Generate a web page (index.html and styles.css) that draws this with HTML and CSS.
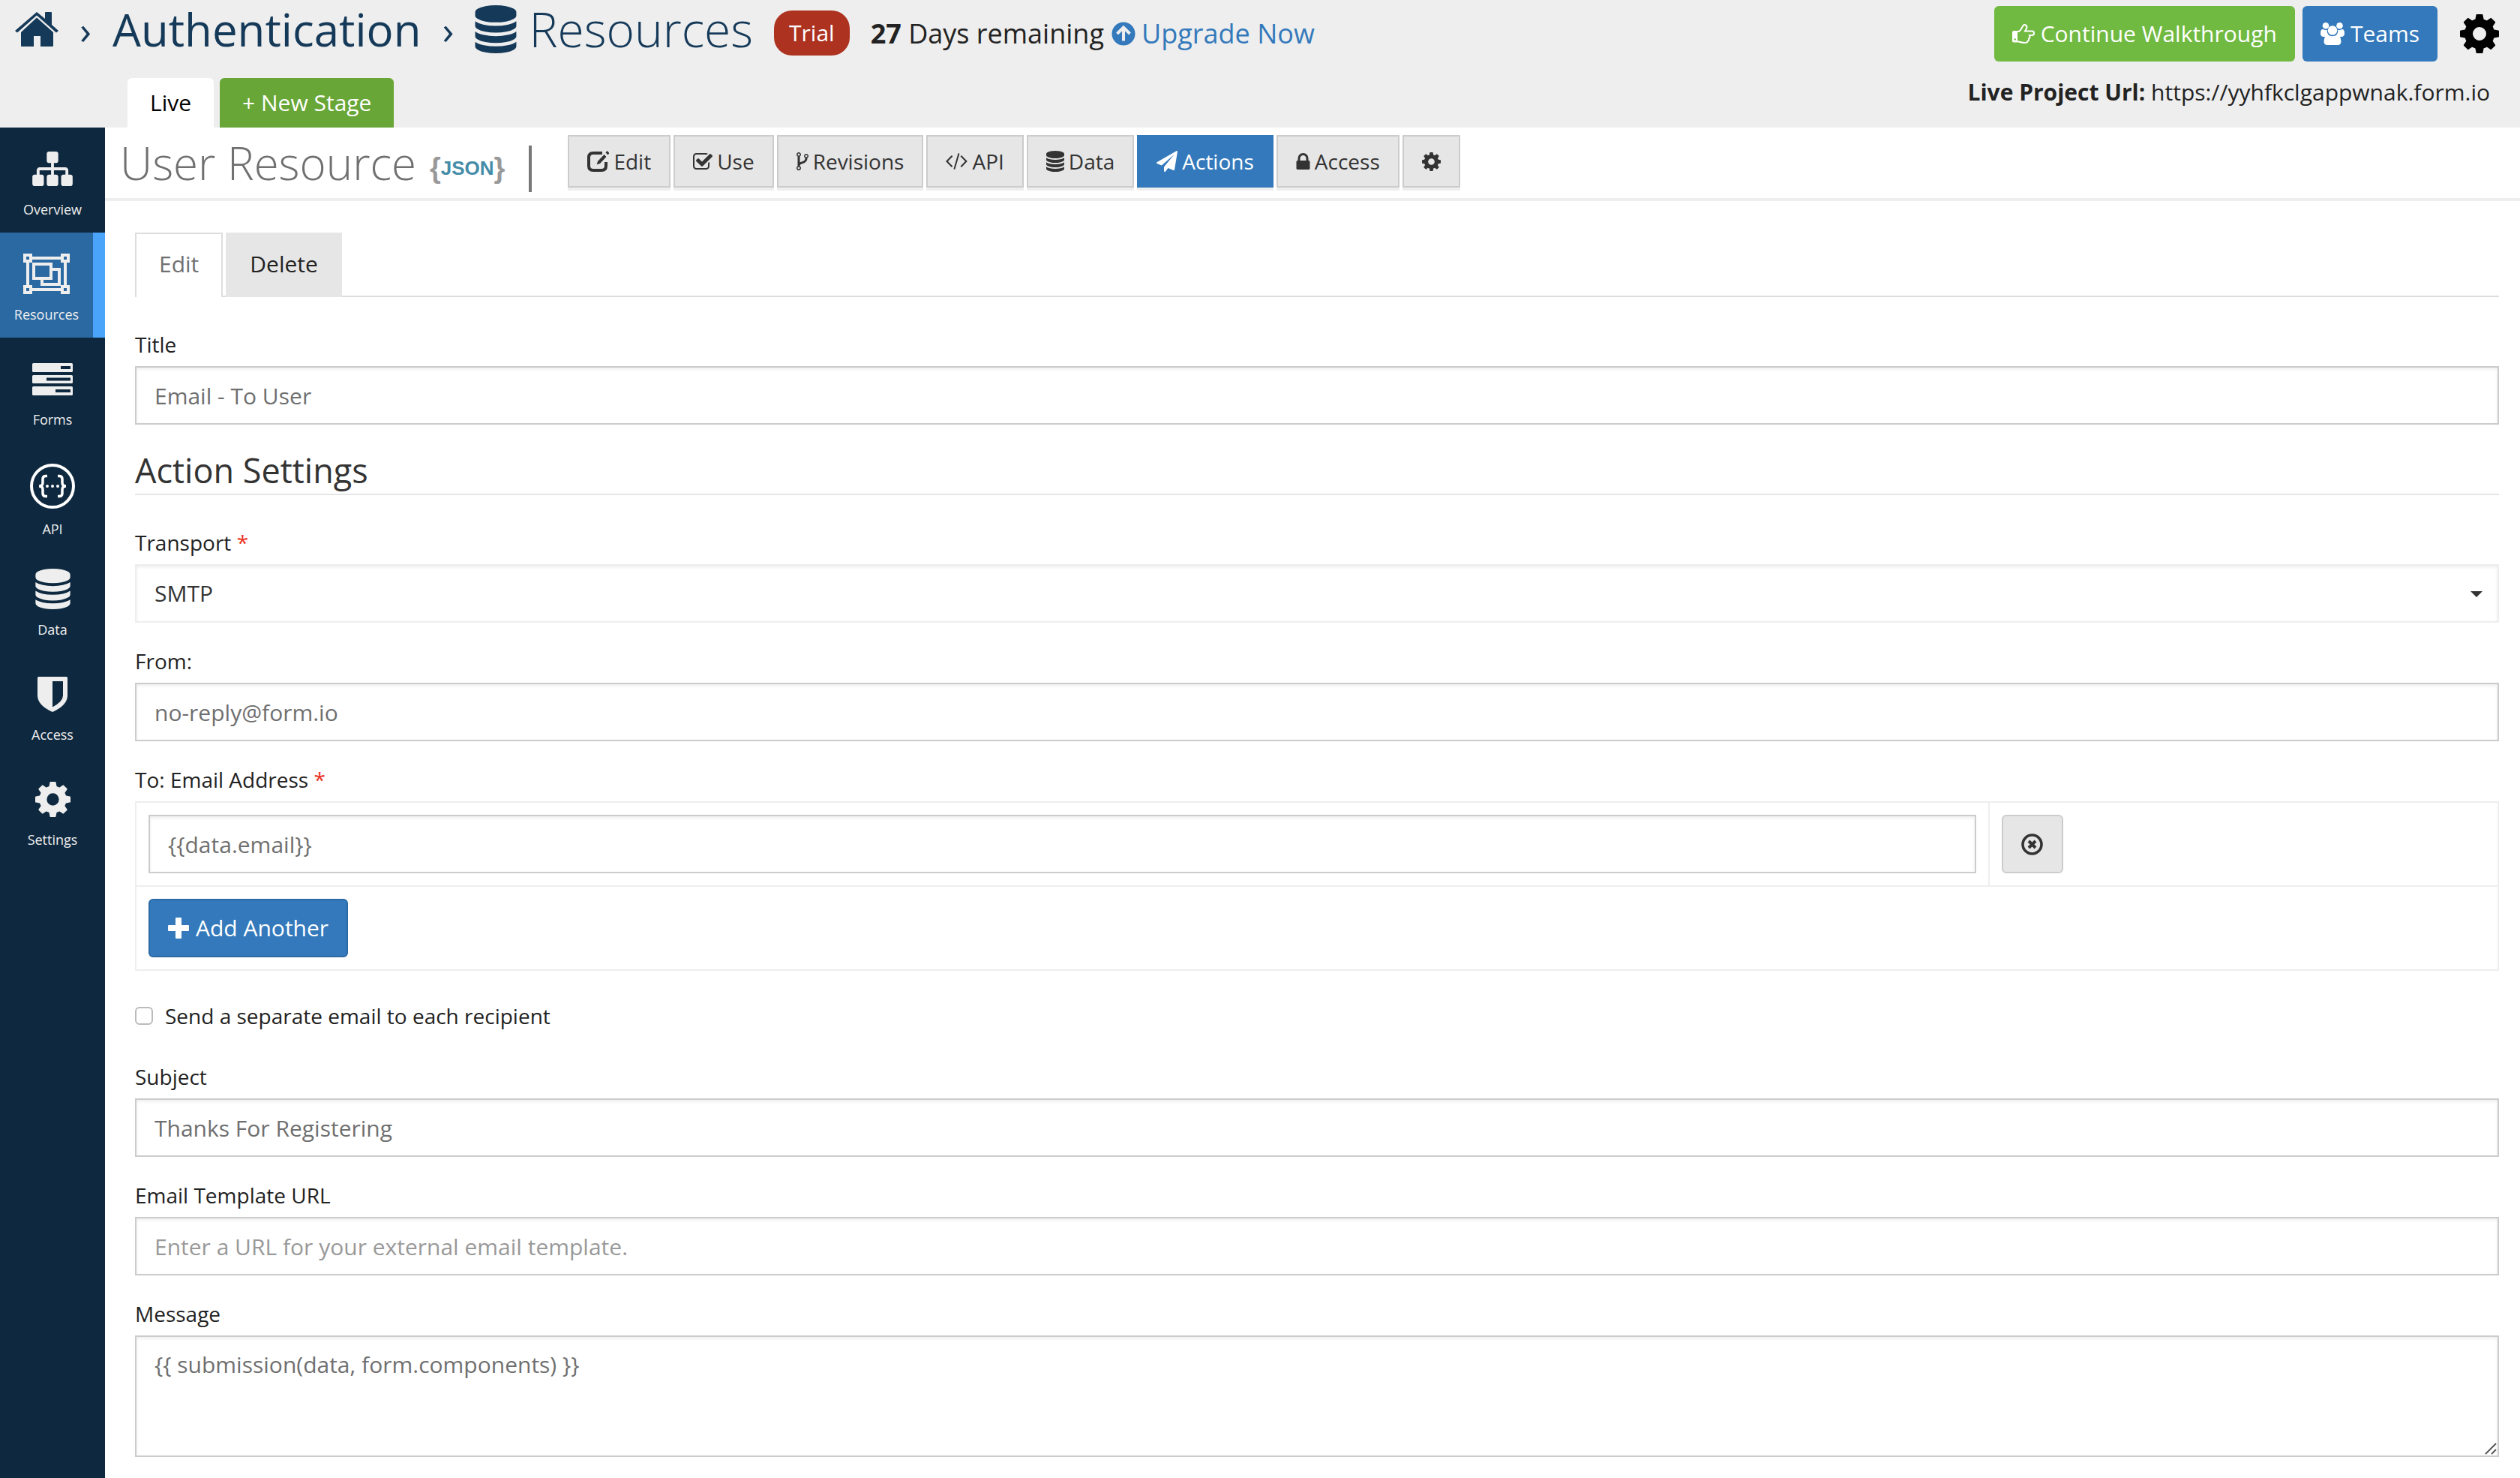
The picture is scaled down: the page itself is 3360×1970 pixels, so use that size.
FILE: index.html
```html
<!DOCTYPE html>
<html lang="en">
<head>
<meta charset="utf-8">
<title>User Resource - Actions</title>
<link rel="stylesheet" href="styles.css">
</head>
<body>
<svg class="sprite" aria-hidden="true">
  <symbol id="i-home" viewBox="0 0 58 46"><path d="M29 0 40 9V1q0-1 1-1h7q1 0 1 1v16l9 8-3 2.500L29 4.500 3 27.500 0 25z"/><path d="M29 7.500 51 27v18q0 1-1 1H34V32h-9v14H9q-1 0-1-1V27z"/></symbol>
  <symbol id="i-db" viewBox="128 0 1536 1792"><path d="M896 768q237 0 443-43t325-127v170q0 69-103 128t-280 93.500-385 34.500-385-34.500-280-93.500-103-128v-170q119 84 325 127t443 43zm0 768q237 0 443-43t325-127v170q0 69-103 128t-280 93.500-385 34.500-385-34.500-280-93.500-103-128v-170q119 84 325 127t443 43zm0-384q237 0 443-43t325-127v170q0 69-103 128t-280 93.500-385 34.500-385-34.500-280-93.500-103-128v-170q119 84 325 127t443 43zm0-1152q208 0 385 34.500t280 93.500 103 128v128q0 69-103 128t-280 93.500-385 34.500-385-34.500-280-93.500-103-128v-128q0-69 103-128t280-93.500 385-34.500z"/></symbol>
  <symbol id="i-cog" viewBox="-26 -26 52 52"><circle r="14.500" fill="none" stroke="currentColor" stroke-width="11"/><g id="teeth"><path id="tooth" d="M-6-17-4.500-25q0-1 1-1h7q1 0 1 1L6-17z"/><use href="#tooth" transform="rotate(45)"/><use href="#tooth" transform="rotate(90)"/><use href="#tooth" transform="rotate(135)"/><use href="#tooth" transform="rotate(180)"/><use href="#tooth" transform="rotate(225)"/><use href="#tooth" transform="rotate(270)"/><use href="#tooth" transform="rotate(315)"/></g></symbol>
  <symbol id="i-sitemap" viewBox="0 128 1792 1536"><path d="M1792 1248v320q0 40-28 68t-68 28h-320q-40 0-68-28t-28-68v-320q0-40 28-68t68-28h96v-192h-512v192h96q40 0 68 28t28 68v320q0 40-28 68t-68 28h-320q-40 0-68-28t-28-68v-320q0-40 28-68t68-28h96v-192h-512v192h96q40 0 68 28t28 68v320q0 40-28 68t-68 28h-320q-40 0-68-28t-28-68v-320q0-40 28-68t68-28h96v-192q0-52 38-90t90-38h512v-192h-96q-40 0-68-28t-28-68v-320q0-40 28-68t68-28h320q40 0 68 28t28 68v320q0 40-28 68t-68 28h-96v192h512q52 0 90 38t38 90v192h96q40 0 68 28t28 68z"/></symbol>
  <symbol id="i-group" viewBox="0 0 62 54"><g fill="none" stroke="currentColor" stroke-width="4"><path d="M12 6h38M12 48h38M6 12v30M56 12v30"/><rect x="2" y="2" width="8" height="8"/><rect x="52" y="2" width="8" height="8"/><rect x="2" y="44" width="8" height="8"/><rect x="52" y="44" width="8" height="8"/><rect x="14" y="14" width="23" height="19"/><path d="M38 21h10v20H25v-8"/></g></symbol>
  <symbol id="i-server" viewBox="0 0 54 43"><path fill-rule="evenodd" d="M1.500 0h51q1.500 0 1.500 1.500v9q0 1.500-1.500 1.500h-51Q0 12 0 10.500v-9Q0 0 1.500 0zM38 4v4h13V4zM1.500 16h51q1.500 0 1.500 1.500v8q0 1.500-1.500 1.500h-51Q0 27 0 25.500v-8Q0 16 1.500 16zM19 19.500v4h32v-4zM1.500 31h51q1.500 0 1.500 1.500v9q0 1.500-1.500 1.500h-51Q0 43 0 41.500v-9Q0 31 1.500 31zM31 35v4h20v-4z"/></symbol>
  <symbol id="i-api" viewBox="0 0 60 60"><g fill="none" stroke="#fff" stroke-width="4"><circle cx="30" cy="30" r="28"/><path stroke-width="3.500" d="M23 16.500h-2q-4 0-4 4v5q0 4.500-5 4.500 5 0 5 4.500v5q0 4 4 4h2M37 16.500h2q4 0 4 4v5q0 4.500 5 4.500-5 0-5 4.500v5q0 4-4 4h-2"/></g><g fill="#fff"><circle cx="23" cy="30" r="2"/><circle cx="30" cy="30" r="2"/><circle cx="37" cy="30" r="2"/></g></symbol>
  <symbol id="i-shield" viewBox="0 0 40 47"><path fill-rule="evenodd" d="M1.500 0h37Q40 0 40 1.500V25Q40 38 20 47 0 38 0 25V1.500Q0 0 1.500 0zM20 6v34.500Q34 33 34 25V6z"/></symbol>
  <symbol id="i-edit" viewBox="0 0 29 28"><path d="M20 3H8Q2 3 2 9v11q0 6 6 6h11q6 0 6-6v-5" fill="none" stroke="currentColor" stroke-width="4"/><path d="M12 19l1.500-5L22.500 4.500 26 8 17 17.500z" stroke="#e6e6e6"/><path d="M24.500 2.500 26.500 0 29.500 3 27.500 5.500z"/></symbol>
  <symbol id="i-check" viewBox="64 128 1664 1408"><path d="M1472 930v318q0 119-84.500 203.500t-203.500 84.500h-832q-119 0-203.500-84.500t-84.500-203.500v-832q0-119 84.500-203.500t203.500-84.500h832q63 0 117 25 15 7 18 23 3 17-9 29l-49 49q-10 10-23 10-3 0-9-2-23-6-45-6h-832q-66 0-113 47t-47 113v832q0 66 47 113t113 47h832q66 0 113-47t47-113v-254q0-13 9-22l64-64q10-10 23-10 6 0 12 3 20 8 20 29zm231-489l-814 814q-24 24-57 24t-57-24l-430-430q-24-24-24-57t24-57l110-110q24-24 57-24t57 24l263 263 647-647q24-24 57-24t57 24l110 110q24 24 24 57t-24 57z"/></symbol>
  <symbol id="i-fork" viewBox="384 128 1024 1536"><path d="M672 1472q0-40-28-68t-68-28-68 28-28 68 28 68 68 28 68-28 28-68zm0-1152q0-40-28-68t-68-28-68 28-28 68 28 68 68 28 68-28 28-68zm640 128q0-40-28-68t-68-28-68 28-28 68 28 68 68 28 68-28 28-68zm96 0q0 52-26 96.500t-70 69.500q-2 287-226 414-67 38-203 81-128 40-169.500 71t-41.500 100v26q44 25 70 69.500t26 96.500q0 80-56 136t-136 56-136-56-56-136q0-52 26-96.500t70-69.500v-820q-44-25-70-69.500t-26-96.500q0-80 56-136t136-56 136 56 56 136q0 52-26 96.500t-70 69.500v497q54-26 154-57 55-17 87.500-29.500t70.500-31 59-39.500 40.500-51 28-69.500 8.500-91.500q-44-25-70-69.500t-26-96.500q0-80 56-136t136-56 136 56 56 136z"/></symbol>
  <symbol id="i-code" viewBox="-9 256 1820 1408"><path d="M553 1399l-50 50q-10 10-23 10t-23-10l-466-466q-10-10-10-23t10-23l466-466q10-10 23-10t23 10l50 50q10 10 10 23t-10 23l-393 393 393 393q10 10 10 23t-10 23zm591-1067l-373 1291q-4 13-15.500 19.500t-23.500 2.500l-62-17q-13-4-19.500-15.500t-2.500-24.500l373-1291q4-13 15.500-19.500t23.500-2.500l62 17q13 4 19.500 15.500t2.500 24.500zm657 651l-466 466q-10 10-23 10t-23-10l-50-50q-10-10-10-23t10-23l393-393-393-393q-10-10-10-23t10-23l50-50q10-10 23-10t23 10l466 466q10 10 10 23t-10 23z"/></symbol>
  <symbol id="i-plane" viewBox="0 0 1792 1792"><path d="M1764 11q33 24 27 64l-256 1536q-5 29-32 45-14 8-31 8-11 0-24-5l-453-185-242 295q-18 23-49 23-13 0-22-4-19-7-30.500-23.500t-11.500-36.500v-349l864-1059-1069 925-395-162q-37-14-40-55-2-40 32-59l1664-960q15-9 32-9 20 0 36 11z"/></symbol>
  <symbol id="i-lock" viewBox="320 128 1152 1408"><path d="M640 768h512v-192q0-106-75-181t-181-75-181 75-75 181v192zm832 96v576q0 40-28 68t-68 28h-960q-40 0-68-28t-28-68v-576q0-40 28-68t68-28h32v-192q0-184 132-316t316-132 316 132 132 316v192h32q40 0 68 28t28 68z"/></symbol>
  <symbol id="i-up" viewBox="0 0 32 32"><circle cx="16" cy="16" r="15.500"/><path d="M7.500 16 16 7.500 24.500 16M16 9v16.500" fill="none" stroke="#eee" stroke-width="4"/></symbol>
  <symbol id="i-hand" viewBox="0 0 30 26"><path d="M2 10h6q2 0 4-3.500L14.500 2q2-2 4 0t0 5l-1.500 2.500h9.500q2.500 0 2.500 2.700T26.500 15H23q1.500 3-1 4.500.5 2.500-1.500 3.500-.5 2-3 2-5 0-9-1.500H2q-1 0-1-1V11q0-1 1-1z" fill="none" stroke="currentColor" stroke-width="2"/><path d="M1 10h6v13.500H1z"/><circle cx="3.700" cy="20.500" r="1.200" fill="#70ba41"/></symbol>
  <symbol id="i-users" viewBox="0 0 32 30"><circle cx="7" cy="4.300" r="4.300"/><circle cx="25.500" cy="4.300" r="4.300"/><circle cx="16" cy="10.500" r="6.200"/><path d="M3 9q4 2 6 .5-1 4 2 7-3 0-5 2.500H3q-3-1-3-4.500Q0 9 3 9zM29 9q3 0 3 5.500 0 3.500-3 4.500h-3q-2-2.500-5-2.500 3-3 2-7 2 1.500 6-.5zM10 16.500q6 3.500 12 0 5 .5 5.500 8.500 0 5-4.500 5H9q-4.500 0-4.500-5 .5-8 5.500-8.500z"/></symbol>
  <symbol id="i-plus" viewBox="0 0 28 28"><path d="M11 0h6q1 0 1 1v9h9q1 0 1 1v6q0 1-1 1h-9v9q0 1-1 1h-6q-1 0-1-1v-9H1q-1 0-1-1v-6q0-1 1-1h9V1q0-1 1-1z"/></symbol>
  <symbol id="i-remove" viewBox="0 0 29 29"><circle cx="14.500" cy="14.500" r="12.500" fill="none" stroke="currentColor" stroke-width="3.600"/><path d="M10 10l9 9M19 10l-9 9" stroke="currentColor" stroke-width="4"/></symbol>
  <symbol id="i-grip" viewBox="0 0 16 16"><path d="M1 15 15 1M9 15 15 9" stroke="#58585a" stroke-width="2" fill="none"/></symbol>
</svg>

<header class="topbar">
  <div class="topbar-row">
    <nav class="crumbs" aria-label="Breadcrumb">
      <a class="crumb-home" href="#" aria-label="Home"><svg class="ico" width="58" height="46"><use href="#i-home"/></svg></a>
      <span class="sep">›</span>
      <a class="crumb" href="#">Authentication</a>
      <span class="sep">›</span>
      <a class="crumb current" href="#"><svg class="ico" width="56" height="64"><use href="#i-db"/></svg>Resources</a>
    </nav>
    <span class="trial">Trial</span>
    <span class="remaining"><b>27</b> Days remaining</span>
    <a class="upgrade" href="#"><svg class="ico" width="32" height="32"><use href="#i-up"/></svg>Upgrade Now</a>
    <div class="top-actions">
      <button class="top-btn green" type="button"><svg class="ico" width="30" height="26"><use href="#i-hand"/></svg>Continue Walkthrough</button>
      <button class="top-btn blue" type="button"><svg class="ico" width="32" height="30"><use href="#i-users"/></svg>Teams</button>
      <button class="cog-btn" type="button" aria-label="Settings"><svg class="ico" width="52" height="52"><use href="#i-cog"/></svg></button>
    </div>
  </div>
  <div class="stage-row">
    <a class="stage live" href="#">Live</a>
    <a class="stage new" href="#">+ New Stage</a>
    <p class="project-url"><b>Live Project Url:</b> https://yyhfkclgappwnak.form.io</p>
  </div>
</header>

<div class="shell">
  <nav class="sidebar" aria-label="Project">
    <a class="side-item" href="#"><span class="side-ico"><svg class="ico" width="54" height="46"><use href="#i-sitemap"/></svg></span>Overview</a>
    <a class="side-item active" href="#"><span class="side-ico"><svg class="ico" width="62" height="54"><use href="#i-group"/></svg></span>Resources</a>
    <a class="side-item" href="#"><span class="side-ico"><svg class="ico" width="54" height="43"><use href="#i-server"/></svg></span>Forms</a>
    <a class="side-item" href="#"><span class="side-ico"><svg class="ico" width="60" height="60"><use href="#i-api"/></svg></span>API</a>
    <a class="side-item" href="#"><span class="side-ico"><svg class="ico" width="47" height="54"><use href="#i-db"/></svg></span>Data</a>
    <a class="side-item" href="#"><span class="side-ico"><svg class="ico" width="40" height="47"><use href="#i-shield"/></svg></span>Access</a>
    <a class="side-item" href="#"><span class="side-ico"><svg class="ico" width="47" height="47"><use href="#i-cog"/></svg></span>Settings</a>
  </nav>

  <main class="main">
    <div class="resource-bar">
      <h1>User Resource</h1>
      <a class="json" href="#"><span class="brace">{</span>JSON<span class="brace">}</span></a>
      <span class="rule"></span>
      <div class="tools">
        <a class="tool" href="#"><svg class="ico" width="29" height="28"><use href="#i-edit"/></svg>Edit</a>
        <a class="tool" href="#"><svg class="ico" width="26" height="22"><use href="#i-check"/></svg>Use</a>
        <a class="tool" href="#"><svg class="ico" width="16" height="24"><use href="#i-fork"/></svg>Revisions</a>
        <a class="tool" href="#"><svg class="ico" width="29" height="22"><use href="#i-code"/></svg>API</a>
        <a class="tool" href="#"><svg class="ico" width="24" height="28"><use href="#i-db"/></svg>Data</a>
        <a class="tool on" href="#"><svg class="ico" width="28" height="28"><use href="#i-plane"/></svg>Actions</a>
        <a class="tool" href="#"><svg class="ico" width="19" height="22"><use href="#i-lock"/></svg>Access</a>
        <a class="tool" href="#" aria-label="Settings"><svg class="ico" width="25" height="25"><use href="#i-cog"/></svg></a>
      </div>
    </div>

    <form class="content">
      <div class="tabs">
        <a class="tab on" href="#">Edit</a>
        <a class="tab" href="#">Delete</a>
      </div>
      <div class="field">
        <label for="title">Title</label>
        <input class="control" id="title" type="text" value="Email - To User">
      </div>
      <h2>Action Settings</h2>
      <div class="field">
        <label for="transport">Transport <i class="req">*</i></label>
        <div class="select-wrap">
          <select class="control" id="transport"><option>SMTP</option></select>
        </div>
      </div>
      <div class="field">
        <label for="from">From:</label>
        <input class="control" id="from" type="text" value="no-reply@form.io">
      </div>
      <div class="field">
        <label for="to">To: Email Address <i class="req">*</i></label>
        <table class="emails">
          <tr>
            <td class="email-cell"><input class="control" id="to" type="text" value="{{data.email}}"></td>
            <td><button class="remove" type="button" aria-label="Remove"><svg class="ico" width="29" height="29"><use href="#i-remove"/></svg></button></td>
          </tr>
          <tr>
            <td colspan="2"><button class="add" type="button"><svg class="ico" width="28" height="28"><use href="#i-plus"/></svg>Add Another</button></td>
          </tr>
        </table>
      </div>
      <label class="check"><input type="checkbox">Send a separate email to each recipient</label>
      <div class="field">
        <label for="subject">Subject</label>
        <input class="control" id="subject" type="text" value="Thanks For Registering">
      </div>
      <div class="field">
        <label for="template">Email Template URL</label>
        <input class="control" id="template" type="text" placeholder="Enter a URL for your external email template.">
      </div>
      <div class="field">
        <label for="message">Message</label>
        <div class="area-wrap">
          <textarea class="control" id="message" rows="3">{{ submission(data, form.components) }}</textarea>
          <svg class="grip" width="16" height="16" aria-hidden="true"><use href="#i-grip"/></svg>
        </div>
      </div>
    </form>
  </main>
</div>
</body>
</html>
```

FILE: styles.css
```css
* { box-sizing: border-box; }
body {
  margin: 0;
  min-height: 100vh;
  display: flex;
  flex-direction: column;
  background: #fff;
  color: #222;
  font: 28px/40px "Open Sans", sans-serif;
}
a { color: inherit; text-decoration: none; }
button { font: inherit; color: inherit; cursor: pointer; }
.sprite { position: absolute; width: 0; height: 0; }
.ico { display: block; flex: none; fill: currentColor; }

/* Top bar */
.topbar { background: #eee; display: flex; flex-direction: column; }
.topbar-row { height: 104px; display: flex; align-items: flex-start; padding: 0 28px 0 20px; white-space: nowrap; }
.crumbs { display: flex; align-items: center; height: 78px; color: #153958; }
.sep { width: 72px; text-align: center; font-size: 52px; }
.crumb { font-size: 60px; }
.current { display: flex; align-items: center; gap: 16px; font-size: 64px; font-weight: 300; }
.trial {
  margin: 14px 0 0 28px;
  padding: 0 20px;
  height: 60px;
  border-radius: 24px;
  background: #ad321f;
  color: #fff;
  font-size: 30px;
  line-height: 60px;
}
.remaining { margin-left: 28px; font-size: 36px; line-height: 90px; }
.upgrade { display: flex; align-items: center; gap: 8px; margin-left: 10px; font-size: 36px; line-height: 90px; color: #3379bb; }
.top-actions { display: flex; align-items: center; gap: 10px; margin: 8px 0 0 auto; }
.top-btn {
  display: flex;
  align-items: center;
  gap: 8px;
  height: 74px;
  padding: 0 24px;
  border: 0;
  border-radius: 6px;
  color: #fff;
  font-size: 30px;
}
.green { background: #70ba41; }
.blue { background: #3379bb; }
.cog-btn { margin-left: 20px; padding: 0; border: 0; background: none; color: #000; }
.stage-row { display: flex; gap: 8px; padding: 0 40px 0 170px; font-size: 30px; }
.stage { padding: 0 30px; line-height: 66px; border-radius: 6px 6px 0 0; }
.live { background: #fff; color: #000; }
.new { background: #67a637; color: #fff; }
.project-url { margin: 0 0 0 auto; line-height: 38px; }

/* Sidebar */
.shell { flex: 1; display: flex; }
.sidebar { flex: none; width: 140px; background: #0e293f; color: #eee; }
.side-item {
  display: flex;
  flex-direction: column;
  align-items: center;
  gap: 14px;
  height: 140px;
  padding-top: 28px;
  font-size: 18px;
  line-height: 26px;
}
.side-item.active { background: #2b69a2; border-right: 16px solid #4aa5fa; }
.side-ico { display: flex; align-items: center; min-height: 54px; }

/* Resource bar */
.main { flex: 1; min-width: 0; }
.resource-bar { display: flex; align-items: flex-start; height: 98px; padding-left: 20px; border-bottom: 4px solid #eee; }
h1 { margin: 7px 0 0; color: #707070; font-size: 60px; font-weight: 300; line-height: 80px; }
.json { display: flex; align-items: center; margin: 34px 0 0 18px; color: #448ca8; font: bold 26px/40px "Liberation Sans", sans-serif; }
.brace { color: #999; font-size: 38px; }
.rule { width: 4px; height: 62px; margin: 24px 48px 0 32px; background: #777; }
.tools { display: flex; gap: 4px; margin-top: 10px; }
.tool {
  display: flex;
  align-items: center;
  gap: 6px;
  height: 70px;
  padding: 0 24px;
  border: 2px solid #ccc;
  background: #e6e6e6;
  box-shadow: 0 4px #eee;
  color: #333;
}
.tool.on { border-color: #3379bb; background: #3379bb; color: #fff; }

/* Form */
.content { padding: 42px 28px 28px 40px; }
.tabs { display: flex; gap: 4px; height: 86px; margin-bottom: 42px; border-bottom: 2px solid #ddd; }
.tab { height: 86px; padding: 0 32px; background: #e6e6e6; font-size: 30px; line-height: 84px; }
.tab.on { padding: 0 30px; border: 2px solid #ddd; border-bottom: 0; background: #fff; color: #707070; line-height: 80px; }
.field { margin-bottom: 30px; }
.field label { display: block; padding-top: 1px; margin-bottom: 9px; }
.req { color: #eb3323; font-style: normal; }
.control {
  display: block;
  width: 100%;
  height: 78px;
  margin: 0;
  padding: 0 24px;
  border: 2px solid #ccc;
  border-radius: 0;
  background: #fff;
  box-shadow: inset 0 2px 4px rgba(0, 0, 0, .08);
  color: #6f6f6f;
  font: 30px/42px "Open Sans", sans-serif;
}
.control::placeholder { color: #999; opacity: 1; }
textarea.control { height: 162px; padding-top: 16px; }
textarea::-webkit-resizer { background: transparent; }
.area-wrap { position: relative; }
.grip { position: absolute; right: 3px; bottom: 3px; pointer-events: none; }
select.control { appearance: none; border-color: #eee; color: #333; }
.select-wrap { position: relative; }
.select-wrap::after {
  content: "";
  position: absolute;
  top: 36px;
  right: 22px;
  border: 8px solid transparent;
  border-top-color: #333;
  border-bottom: 0;
}
h2 { margin: 0 0 42px; border-bottom: 2px solid #e5e5e5; color: #333; font-size: 45px; font-weight: 400; line-height: 62px; }
.emails { width: 100%; border-collapse: collapse; margin-bottom: 40px; }
.emails td { padding: 16px; border: 2px solid #eee; }
.email-cell { width: 78.43%; }
.remove { display: flex; align-items: center; justify-content: center; width: 82px; height: 78px; padding: 0; border: 2px solid #ccc; border-radius: 6px; background: #e6e6e6; color: #333; }
.add { display: flex; align-items: center; gap: 9px; height: 78px; padding: 0 24px; border: 2px solid #2b6aa5; border-radius: 6px; background: #3379bb; color: #fff; font-size: 30px; }
.check { display: flex; align-items: center; gap: 16px; margin-bottom: 40px; }
.check input { appearance: none; width: 24px; height: 24px; margin: 0; border: 2px solid #bbb; border-radius: 6px; background: #fff; }
```
